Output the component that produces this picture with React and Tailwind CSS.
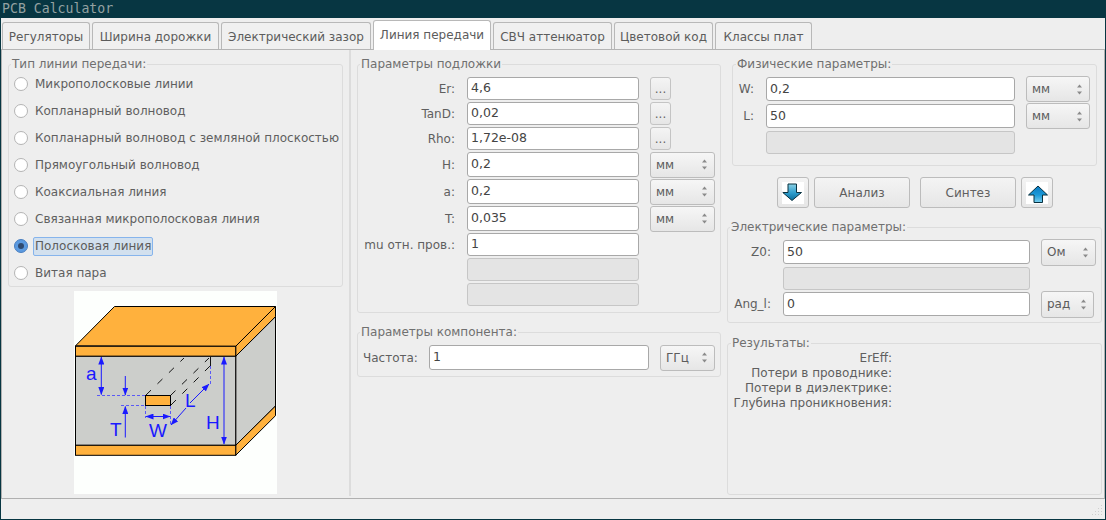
import React from "react";

const tabs = [
  { label: "Регуляторы", width: "w-[88px]" },
  { label: "Ширина дорожки", width: "w-[127px]" },
  { label: "Электрический зазор", width: "w-[150px]" },
  { label: "Линия передачи", width: "w-[118px]", active: true },
  { label: "СВЧ аттенюатор", width: "w-[119px]" },
  { label: "Цветовой код", width: "w-[99px]" },
  { label: "Классы плат", width: "w-[97px]" },
];

const lineTypes = [
  "Микрополосковые линии",
  "Копланарный волновод",
  "Копланарный волновод с земляной плоскостью",
  "Прямоугольный волновод",
  "Коаксиальная линия",
  "Связанная микрополосковая линия",
  "Полосковая линия",
  "Витая пара",
];

function Group({ title, className, legendLeft = "left-[2px]", children }) {
  return (
    <div className={`relative rounded-[3px] border border-[#dcdcdc] ${className}`}>
      <span className={`absolute top-[-9px] whitespace-nowrap bg-[#eeeeee] px-px text-[12px] leading-[16px] text-[#707070] ${legendLeft}`}>
        {title}
      </span>
      {children}
    </div>
  );
}

function Field({ value, className }) {
  return (
    <div
      className={`flex shrink-0 items-center rounded-[3px] border border-[#a8a8a8] bg-white pl-[3px] text-[12.5px] text-[#444444] ${className}`}
    >
      {value}
    </div>
  );
}

function DisabledField({ className }) {
  return <div className={`shrink-0 rounded-[3px] border border-[#c6c6c6] bg-[#e4e4e4] ${className}`} />;
}

function Combo({ value, className }) {
  return (
    <div
      className={`flex shrink-0 items-center justify-between rounded-[3px] border border-[#bcbcbc] bg-gradient-to-b from-[#f6f6f6] to-[#e6e6e6] pl-[5px] pr-[6px] text-[12px] text-[#5c5c5c] ${className}`}
    >
      <span>{value}</span>
      <svg width="7" height="13" viewBox="0 0 7 13">
        <path d="M3.5 1.5 L6 4.5 L1 4.5 Z" fill="#8a8a8a" />
        <path d="M3.5 11.5 L6 8.5 L1 8.5 Z" fill="#8a8a8a" />
      </svg>
    </div>
  );
}

function DotsButton() {
  return (
    <div className="ml-[11px] flex h-[23px] w-[21px] shrink-0 items-end justify-center rounded-[3px] border border-[#c4c4c4] bg-gradient-to-b from-[#f4f4f4] to-[#e6e6e6] pb-[2px] text-[12px] leading-[16px] text-[#666666]">
      ...
    </div>
  );
}

function Radio({ label, checked }) {
  return (
    <div className="flex h-[27px] items-center pl-[5px]">
      {checked ? (
        <div className="flex h-[14px] w-[14px] shrink-0 items-center justify-center rounded-full border border-[#4a7fc0] bg-[#5b9ae0]">
          <div className="h-[6px] w-[6px] rounded-full bg-[#2f4a70]" />
        </div>
      ) : (
        <div className="h-[14px] w-[14px] shrink-0 rounded-full border border-[#b4b4b4] bg-white" />
      )}
      <span
        className={
          checked
            ? "ml-[5px] mt-px rounded-[2px] border border-[#86b4ec] bg-[#d2e0ee] px-px text-[12px] leading-[17px] text-[#5c5c5c]"
            : "ml-[7px] mt-[2px] whitespace-nowrap text-[12px] leading-[17px] text-[#5f5f5f]"
        }
      >
        {label}
      </span>
    </div>
  );
}

function SubstrateRow({ label, children, h = "h-[23px]" }) {
  return (
    <div className={`flex items-center ${h}`}>
      <div className="w-[97px] shrink-0 whitespace-nowrap text-right text-[12px] text-[#5f5f5f]">{label}</div>
      <div className="w-[12px] shrink-0" />
      {children}
    </div>
  );
}

function Arrow({ up }) {
  return (
    <div className="flex h-[31px] w-[32px] shrink-0 items-center justify-center rounded-[3px] border border-[#bcbcbc] bg-gradient-to-b from-[#f4f4f4] to-[#e6e6e6]">
      <svg width="22" height="22" viewBox="0 0 22 22" className="bg-white">
        <defs>
          <linearGradient id={up ? "arrowUp" : "arrowDown"} x1="0" y1="0" x2="0" y2="1">
            <stop offset="0" stopColor={up ? "#0a78c0" : "#8ad0e4"} />
            <stop offset="0.55" stopColor={up ? "#1c9ad8" : "#2c9ccc"} />
            <stop offset="1" stopColor={up ? "#7cd0ee" : "#0a6c98"} />
          </linearGradient>
        </defs>
        <path
          d={
            up
              ? "M12 4 L21.5 13 L16.5 13 L16.5 20.5 L8 20.5 L8 13 L2.5 13 Z"
              : "M6 2 L14.5 2 L14.5 10.5 L19.5 10.5 L10 18.5 L0.8 10.5 L6 10.5 Z"
          }
          fill={`url(#${up ? "arrowUp" : "arrowDown"})`}
          stroke="#08303f"
          strokeWidth="1"
          strokeLinejoin="miter"
        />
      </svg>
    </div>
  );
}

function ActionButton({ label }) {
  return (
    <div className="flex h-[31px] w-[96px] shrink-0 items-center justify-center rounded-[3px] border border-[#bcbcbc] bg-gradient-to-b from-[#f4f4f4] to-[#e6e6e6] text-[12px] text-[#5f5f5f]">
      {label}
    </div>
  );
}

function DoubleArrow({ x1, y1, x2, y2 }) {
  return <line x1={x1} y1={y1} x2={x2} y2={y2} stroke="#1a1aff" strokeWidth="1" markerStart="url(#head)" markerEnd="url(#head)" />;
}

function StriplineDiagram() {
  return (
    <svg viewBox="74 291 203 203" className="ml-[72px] mt-[4px] h-[203px] w-[203px] bg-[#fdfffd]">
      <defs>
        <marker id="head" viewBox="0 0 8 6" refX="7.5" refY="3" markerWidth="8" markerHeight="6" orient="auto-start-reverse" markerUnits="userSpaceOnUse">
          <path d="M0 0 L8 3 L0 6 Z" fill="#1a1aff" />
        </marker>
      </defs>
      <g stroke="#000000" strokeWidth="1" strokeLinejoin="miter">
        <path d="M75.5 345.8 L114.5 306.5 L275.5 306.5 L235.7 346.3 Z" fill="#ffb13d" />
        <path d="M235.7 346.3 L275.5 306.5 L275.5 316.7 L235.7 356.3 Z" fill="#ffb13d" />
        <path d="M235.7 356.3 L275.5 316.7 L275.5 406 L235.7 445.3 Z" fill="#cccecb" />
        <path d="M235.7 445.3 L275.5 406 L275.5 415.7 L235.7 455.3 Z" fill="#ffb13d" />
        <rect x="75.5" y="346.3" width="160.2" height="10" fill="#ffb13d" />
        <rect x="75.5" y="356.3" width="160.2" height="89" fill="#cccecb" />
        <rect x="75.5" y="445.3" width="160.2" height="10" fill="#ffb13d" />
        <rect x="145.5" y="395.5" width="25" height="10" fill="#ffb13d" />
      </g>
      <g stroke="#000000" strokeWidth="0.9" strokeDasharray="7 9" fill="none">
        <line x1="146" y1="395" x2="184" y2="358" />
        <line x1="170.5" y1="395.5" x2="209" y2="358" />
        <line x1="171" y1="405" x2="210" y2="366" />
        <line x1="210.5" y1="357" x2="210.5" y2="366" strokeDasharray="none" />
      </g>
      <g stroke="#3c3cff" strokeWidth="0.8" strokeDasharray="3 2" fill="none">
        <line x1="97" y1="395.5" x2="145" y2="395.5" />
        <line x1="121" y1="405.5" x2="145" y2="405.5" />
        <line x1="145.5" y1="406" x2="145.5" y2="418" />
        <line x1="170.5" y1="406" x2="170.5" y2="425" />
        <line x1="210.5" y1="366" x2="210.5" y2="385" />
      </g>
      <DoubleArrow x1="101.3" y1="357" x2="101.3" y2="394.5" />
      <line x1="125.3" y1="376" x2="125.3" y2="395" stroke="#1a1aff" markerEnd="url(#head)" />
      <line x1="125.3" y1="437.5" x2="125.3" y2="406.5" stroke="#1a1aff" markerEnd="url(#head)" />
      <DoubleArrow x1="146" y1="416.5" x2="170" y2="416.5" />
      <line x1="186" y1="408" x2="171" y2="425" stroke="#1a1aff" markerEnd="url(#head)" />
      <line x1="190" y1="403" x2="209" y2="384" stroke="#1a1aff" markerEnd="url(#head)" />
      <DoubleArrow x1="224" y1="357" x2="224" y2="444" />
      <g fill="#1a1aff" fontFamily="'Liberation Sans', sans-serif">
        <text x="86" y="380" fontSize="19">a</text>
        <text x="110" y="436" fontSize="19">T</text>
        <text x="149" y="437" fontSize="19">W</text>
        <text x="185" y="407" fontSize="19">L</text>
        <text x="206" y="429" fontSize="19">H</text>
      </g>
    </svg>
  );
}

export default function App() {
  return (
    <div className="flex h-[520px] w-[1106px] flex-col overflow-hidden bg-[#073642] pb-px pl-px pr-px font-['DejaVu_Sans',sans-serif]">
      <div className="h-[18px] shrink-0 pl-px font-['DejaVu_Sans_Mono',monospace] text-[13.2px] leading-[18px] text-[#93a1a1]">
        PCB Calculator
      </div>

      <div className="flex min-h-0 flex-1 flex-col bg-[#eeeeee]">
        {/* Tabs */}
        <div className="flex h-[32px] shrink-0 items-end gap-[2px] border-b border-[#b4b4b4] pl-px">
          {tabs.map((tab) => (
            <div
              key={tab.label}
              className={
                tab.active
                  ? `-mb-px flex h-[30px] shrink-0 items-center justify-center rounded-t-[3px] border border-b-0 border-[#b8b8b8] bg-white pb-px text-[12px] text-[#5c5c5c] ${tab.width}`
                  : `flex h-[27px] shrink-0 items-center justify-center rounded-t-[3px] border border-b-0 border-[#b8b8b8] bg-[#f0f0f0] pt-[2px] text-[12px] text-[#5c5c5c] ${tab.width}`
              }
            >
              {tab.label}
            </div>
          ))}
        </div>

        {/* Tab page */}
        <div className="flex min-h-0 flex-1 border-x border-b border-[#b0b0b0] pb-[2px]">
          <div className="w-[347px] shrink-0">
            <Group title="Тип линии передачи:" className="ml-[6px] mt-[14px] h-[223px] w-[335px] pt-[5px]">
              {lineTypes.map((label) => (
                <Radio key={label} label={label} checked={label === "Полосковая линия"} />
              ))}
            </Group>
            <StriplineDiagram />
          </div>

          <div className="w-[378px] shrink-0 border-l-2 border-[#dcdcdc]">
            <Group title="Параметры подложки" className="ml-[6px] mt-[14px] h-[249px] w-[364px]">
              <div className="flex flex-col gap-[2px] pt-[12px]">
                <SubstrateRow label="Er:">
                  <Field value="4,6" className="h-[23px] w-[172px]" />
                  <DotsButton />
                </SubstrateRow>
                <SubstrateRow label="TanD:">
                  <Field value="0,02" className="h-[23px] w-[172px]" />
                  <DotsButton />
                </SubstrateRow>
                <SubstrateRow label="Rho:">
                  <Field value="1,72e-08" className="h-[23px] w-[172px]" />
                  <DotsButton />
                </SubstrateRow>
                <SubstrateRow label="H:" h="h-[25px]">
                  <Field value="0,2" className="h-[25px] w-[172px]" />
                  <Combo value="мм" className="ml-[11px] h-[26px] w-[65px]" />
                </SubstrateRow>
                <SubstrateRow label="a:" h="h-[25px]">
                  <Field value="0,2" className="h-[25px] w-[172px]" />
                  <Combo value="мм" className="ml-[11px] h-[26px] w-[65px]" />
                </SubstrateRow>
                <SubstrateRow label="T:" h="h-[25px]">
                  <Field value="0,035" className="h-[25px] w-[172px]" />
                  <Combo value="мм" className="ml-[11px] h-[26px] w-[65px]" />
                </SubstrateRow>
                <SubstrateRow label="mu отн. пров.:">
                  <Field value="1" className="h-[23px] w-[172px]" />
                </SubstrateRow>
                <SubstrateRow label="">
                  <DisabledField className="h-[23px] w-[172px]" />
                </SubstrateRow>
                <SubstrateRow label="">
                  <DisabledField className="h-[23px] w-[172px]" />
                </SubstrateRow>
              </div>
            </Group>

            <Group title="Параметры компонента:" className="ml-[6px] mt-[19px] h-[45px] w-[364px]">
              <div className="mt-[12px] flex h-[25px] items-center pl-[5px]">
                <div className="w-[66px] shrink-0 text-[12px] text-[#5f5f5f]">Частота:</div>
                <Field value="1" className="h-[25px] w-[220px]" />
                <Combo value="ГГц" className="ml-[11px] h-[26px] w-[55px]" />
              </div>
            </Group>
          </div>

          <div className="min-w-0 flex-1">
            <Group title="Физические параметры:" legendLeft="left-[3px]" className="ml-[5px] mt-[14px] h-[102px] w-[365px]">
              <div className="flex flex-col gap-[3px] pt-[12px]">
                <div className="flex h-[24px] items-center">
                  <div className="w-[21px] shrink-0 text-right text-[12px] text-[#5f5f5f]">W:</div>
                  <Field value="0,2" className="ml-[12px] h-[24px] w-[249px]" />
                  <Combo value="мм" className="ml-[11px] h-[26px] w-[64px]" />
                </div>
                <div className="flex h-[24px] items-center">
                  <div className="w-[21px] shrink-0 text-right text-[12px] text-[#5f5f5f]">L:</div>
                  <Field value="50" className="ml-[12px] h-[24px] w-[249px]" />
                  <Combo value="мм" className="ml-[11px] h-[26px] w-[64px]" />
                </div>
                <DisabledField className="ml-[33px] h-[23px] w-[249px]" />
              </div>
            </Group>

            <div className="mt-[11px] flex pl-[50px]">
              <Arrow />
              <div className="ml-[5px]">
                <ActionButton label="Анализ" />
              </div>
              <div className="ml-[10px]">
                <ActionButton label="Синтез" />
              </div>
              <div className="ml-[5px]">
                <Arrow up />
              </div>
            </div>

            <Group title="Электрические параметры:" className="mt-[19px] h-[96px] w-[375px]">
              <div className="pt-[12px]">
                <div className="flex h-[24px] items-center">
                  <div className="w-[43px] shrink-0 text-right text-[12px] text-[#5f5f5f]">Z0:</div>
                  <Field value="50" className="ml-[12px] h-[24px] w-[247px]" />
                  <Combo value="Ом" className="ml-[11px] h-[27px] w-[55px]" />
                </div>
                <DisabledField className="ml-[55px] mt-[3px] h-[23px] w-[247px]" />
                <div className="mt-[2px] flex h-[24px] items-center">
                  <div className="w-[43px] shrink-0 text-right text-[12px] text-[#5f5f5f]">Ang_l:</div>
                  <Field value="0" className="ml-[12px] h-[24px] w-[247px]" />
                  <Combo value="рад" className="ml-[11px] h-[27px] w-[53px]" />
                </div>
              </div>
            </Group>

            <Group title="Результаты:" legendLeft="left-[3px]" className="mt-[20px] h-[152px] w-[375px] pt-[7px]">
              {["ErEff:", "Потери в проводнике:", "Потери в диэлектрике:", "Глубина проникновения:"].map((label) => (
                <div key={label} className="w-[164px] whitespace-nowrap text-right text-[12px] leading-[15px] text-[#5f5f5f]">
                  {label}
                </div>
              ))}
            </Group>
          </div>
        </div>

        {/* Status bar */}
        <div className="flex h-[20px] shrink-0 items-end justify-end">
          <svg width="12" height="14" viewBox="0 0 12 14" className="mb-px mr-px">
            <g fill="#cfcfcf">
              <rect x="9" y="1" width="1" height="1" />
              <rect x="6" y="4" width="1" height="1" />
              <rect x="9" y="4" width="1" height="1" />
              <rect x="3" y="7" width="1" height="1" />
              <rect x="6" y="7" width="1" height="1" />
              <rect x="9" y="7" width="1" height="1" />
              <rect x="0" y="10" width="1" height="1" />
              <rect x="3" y="10" width="1" height="1" />
              <rect x="6" y="10" width="1" height="1" />
              <rect x="9" y="10" width="1" height="1" />
            </g>
          </svg>
        </div>
      </div>
    </div>
  );
}
